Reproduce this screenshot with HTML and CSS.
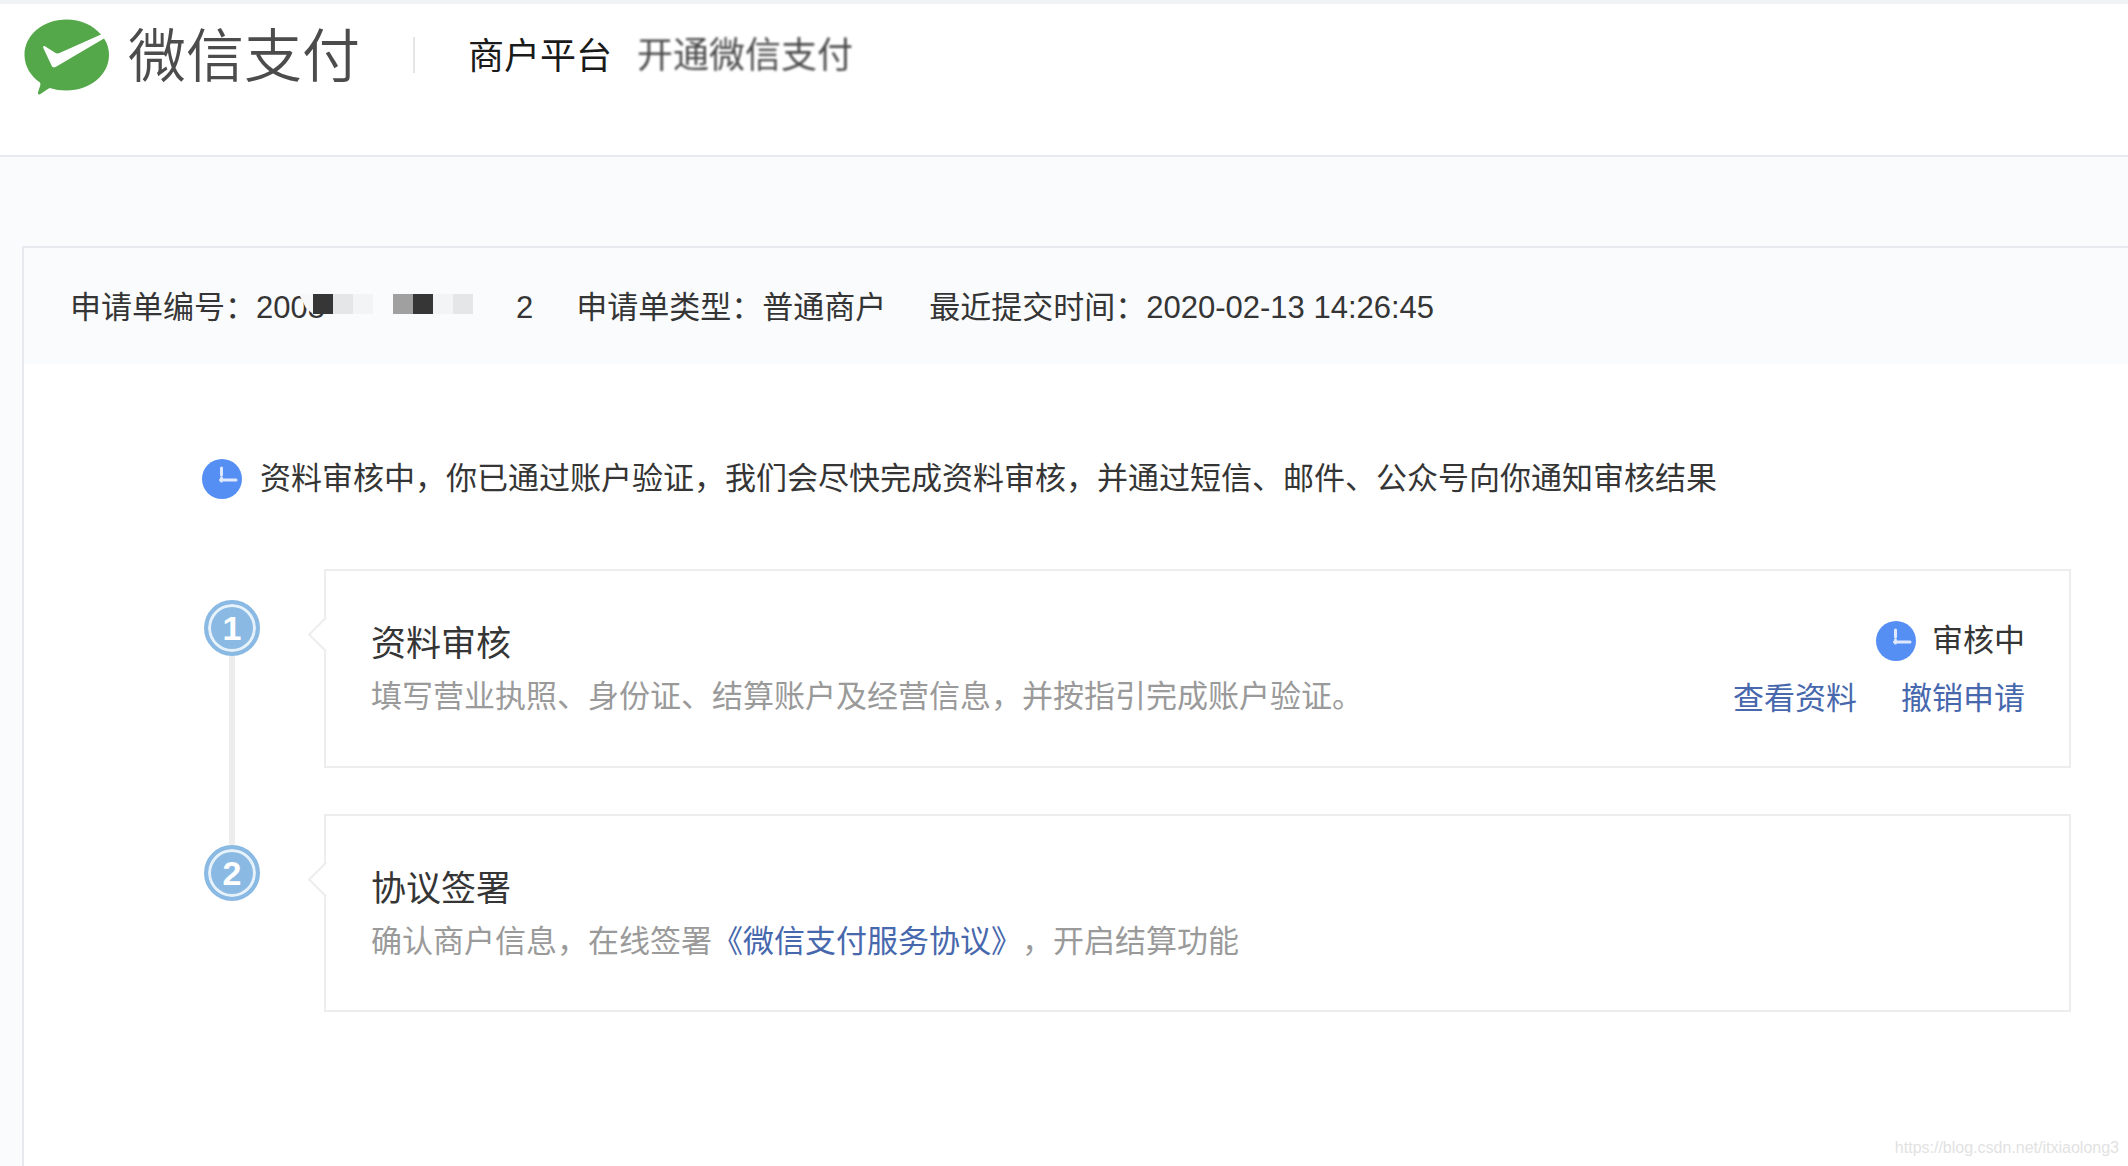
FILE: index.html
```
<!DOCTYPE html>
<html lang="zh-CN">
<head>
    <meta charset="UTF-8">
    <title>微信支付商户平台</title>
    <link rel="stylesheet" href="styles.css">
</head>
<body>
    <!-- 顶部导航 -->
    <header class="header">
        <a href="/" class="logo">
            <svg class="logo-icon" viewBox="0 0 86 76" aria-hidden="true">
                <path fill="#55a84a" d="M42.500 0.500C19 0.500 0.500 16 0.500 36c0 11 6 21 15.500 27.500l0.500 2-2.500 8c-0.400 1.600 0.800 2.400 2 1.800l9.500-6.300c5.500 1.700 11 2.500 17 2.500C66 71.500 85 56 85 36c0-6-1.500-11.500-5-16.500L32 47.700c-2 1.200-3.500 0.800-4.300-1L19.300 29c-0.600-1.600 0.700-2.500 2-1.600l9.500 6.200c1.500 0.900 3 1.200 4.700 0.500L77 15.500C69 6 56.500 0.500 42.500 0.500z"/>
            </svg>
            <span class="logo-text">微信支付</span>
        </a>
        <span class="divider"></span>
        <span class="platform">商户平台</span>
        <h1 class="page-title">开通微信支付</h1>
    </header>

    <main class="panel">
        <!-- 申请单信息 -->
        <div class="info-bar">
            <div class="info-item">申请单编号：2008<span class="mask">
                <i class="cut"></i><i class="dark"></i><i class="light"></i><i class="pale"></i><i></i><i class="gray"></i><i class="dark"></i><i class="pale"></i><i class="light"></i>
            </span>2</div>
            <div class="info-item">申请单类型：普通商户</div>
            <div class="info-item">最近提交时间：2020-02-13 14:26:45</div>
        </div>

        <div class="content">
            <p class="status">
                <svg class="clock" viewBox="0 0 40 40" aria-hidden="true">
                    <circle cx="20" cy="20" r="20" fill="#568ff3"/>
                    <path d="M19.500 9v7M18.500 21H34M19.500 19v3" fill="none" stroke="#dfe9fd" stroke-width="3" stroke-linecap="round"/>
                </svg>
                资料审核中，你已通过账户验证，我们会尽快完成资料审核，并通过短信、邮件、公众号向你通知审核结果
            </p>

            <!-- 步骤列表 -->
            <ol class="steps">
                <li class="step">
                    <span class="step-num">1</span>
                    <section class="card">
                        <div>
                            <h2 class="card-title">资料审核</h2>
                            <p class="card-desc">填写营业执照、身份证、结算账户及经营信息，并按指引完成账户验证。</p>
                        </div>
                        <div class="card-side">
                            <p class="state">
                                <svg class="clock" viewBox="0 0 40 40" aria-hidden="true">
                                    <circle cx="20" cy="20" r="20" fill="#568ff3"/>
                                    <path d="M19.500 9v7M18.500 21H34M19.500 19v3" fill="none" stroke="#dfe9fd" stroke-width="3" stroke-linecap="round"/>
                                </svg>
                                审核中
                            </p>
                            <div class="links">
                                <a href="#">查看资料</a>
                                <a href="#">撤销申请</a>
                            </div>
                        </div>
                    </section>
                </li>
                <li class="step">
                    <span class="step-num">2</span>
                    <section class="card">
                        <div>
                            <h2 class="card-title">协议签署</h2>
                            <p class="card-desc">确认商户信息，在线签署<a href="#">《微信支付服务协议》</a>，开启结算功能</p>
                        </div>
                    </section>
                </li>
            </ol>
        </div>
    </main>

    <div class="watermark">https://blog.csdn.net/itxiaolong3</div>
</body>
</html>
```
FILE: styles.css
```
* {
    box-sizing: border-box;
}
body {
    display: flex;
    flex-direction: column;
    min-height: 100vh;
    margin: 0;
    background-color: #fafbfd;
    color: #353535;
    font-family: "Liberation Sans", "Noto Sans CJK SC", sans-serif;
    font-size: 31px;
    line-height: 44px;
    text-spacing-trim: space-all;
}
h1, h2, p, ol {
    margin: 0;
    padding: 0;
    font-weight: normal;
}
a {
    color: #4768ad;
    text-decoration: none;
}

/* 顶部 */
.header {
    display: flex;
    align-items: flex-start;
    height: 157px;
    padding: 15px 24px 0;
    border-top: 4px solid #f2f3f4;
    border-bottom: 2px solid #e7e9ef;
    background-color: #fff;
}
.logo {
    display: flex;
}
.logo-icon {
    width: 86px;
    height: 76px;
}
.logo-text {
    margin-left: 18px;
    color: #4c4c4c;
    font-size: 58px;
    font-weight: 350;
    line-height: 76px;
}
.divider {
    width: 2px;
    height: 36px;
    margin: 18px 53px 0;
    background-color: #e6e6e6;
}
.platform, .page-title {
    font-size: 36px;
    line-height: 76px;
}
.platform {
    color: #1a1a1a;
}
.page-title {
    margin-left: 25px;
    color: #4c4c4c;
    line-height: 74px;
    filter: blur(1px);
}

/* 主体 */
.panel {
    flex: 1;
    margin: 89px 0 0 22px;
    border: solid #e7e9ef;
    border-width: 2px 0 0 2px;
    background-color: #fff;
}
.info-bar {
    display: flex;
    gap: 43px;
    padding: 38px 46px 34px;
    background-color: #fafbfd;
}
.info-item {
    display: flex;
    white-space: pre;
}
/* 编号打码 */
.mask {
    display: flex;
    width: 217px;
    margin-left: -26px;
    padding-top: 8px;
}
.mask i {
    width: 20px;
    height: 20px;
}
.mask .cut {
    width: 14px;
    background-color: #f6f7f9;
    clip-path: polygon(0 0, 100% 0, 100% 100%, 50% 70%);
}
.mask .dark {
    background-color: #363636;
}
.mask .gray {
    background-color: #a0a0a0;
}
.mask .light {
    background-color: #e5e6e7;
}
.mask .pale {
    background-color: #f3f4f5;
}

.content {
    padding: 92px 57px 60px 178px;
}
.status, .state {
    display: flex;
    align-items: center;
}
.status {
    padding-top: 1px;
}
.clock {
    flex: none;
    width: 40px;
    height: 40px;
    margin-right: 18px;
}
.state .clock {
    margin-right: 16px;
}

/* 步骤 */
.steps {
    margin-top: 68px;
    list-style: none;
}
.step {
    display: flex;
    position: relative;
    padding-bottom: 46px;
}
.step-num {
    flex: none;
    width: 56px;
    height: 56px;
    margin: 31px 64px 0 2px;
    border: 4px solid #8abae3;
    border-radius: 50%;
    background-color: #8abae3;
    box-shadow: inset 0 0 0 3px #e6f1fa;
    color: #fff;
    font-size: 34px;
    font-weight: bold;
    line-height: 48px;
    text-align: center;
}
.step:not(:last-child)::before {
    content: "";
    position: absolute;
    top: 87px;
    bottom: -31px;
    left: 27px;
    width: 6px;
    background-color: #ededed;
}
.card {
    display: flex;
    flex: 1;
    justify-content: space-between;
    position: relative;
    min-height: 198px;
    padding: 48px 44px 45px 45px;
    border: 2px solid #ededed;
}
.card::before {
    content: "";
    position: absolute;
    top: 51px;
    left: -13px;
    width: 23px;
    height: 23px;
    border: solid #ededf0;
    border-width: 0 0 2px 2px;
    background-color: #fff;
    transform: rotate(45deg);
}
.card-title {
    font-size: 35px;
    line-height: 50px;
}
.card-desc {
    margin-top: 6px;
    color: #9a9a9a;
}
.card-side {
    display: flex;
    flex-direction: column;
    align-items: flex-end;
    gap: 14px;
}
.links {
    display: flex;
    gap: 44px;
}

.watermark {
    position: absolute;
    right: 9px;
    bottom: 8px;
    color: #e2e2e2;
    font-size: 16px;
    line-height: 20px;
}
```
